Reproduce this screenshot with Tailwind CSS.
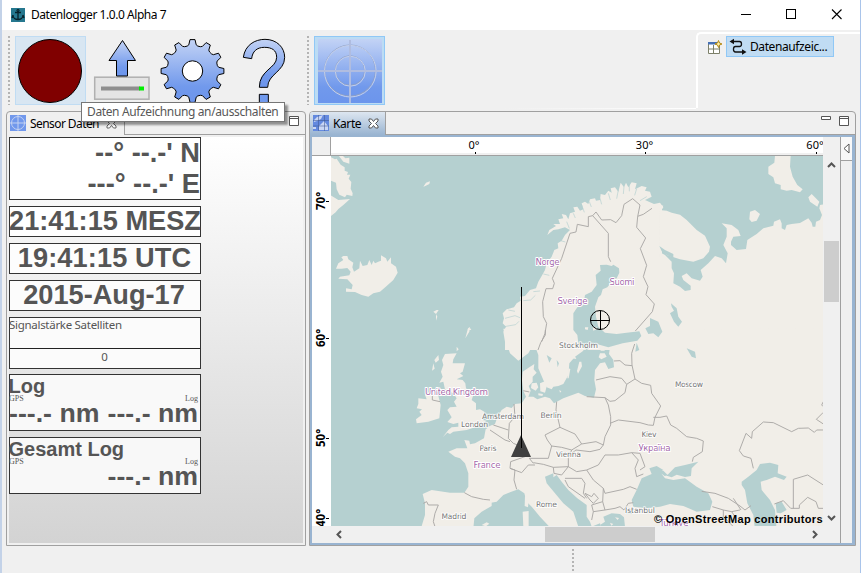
<!DOCTYPE html>
<html lang="de">
<head>
<meta charset="utf-8">
<title>Datenlogger 1.0.0 Alpha 7</title>
<script src="https://cdn.jsdelivr.net/npm/@tailwindcss/browser@4"></script>
</head>
<body class="w-[861px] h-[573px] overflow-hidden bg-[#f0f0f0] font-['Noto_Sans',sans-serif] text-[12px] text-black">
<div class="relative flex flex-col w-[861px] h-[573px] border-l-2 border-l-[#c3d2e8] border-r border-r-[#a9c4ea]">
  <!-- title bar -->
  <header class="flex items-center h-[30px] shrink-0 bg-white pl-[9px]">
    <svg class="w-[14px] h-[14px] shrink-0" viewBox="0 0 14 14"><rect width="14" height="14" fill="#26788f"/><path d="M7 2v10M4 4.500h6M2 7c0 6 10 6 10 0M2 7l-1 3M12 7l1 3" fill="none" stroke="#08232c" stroke-width="1.300"/><circle cx="7" cy="2.500" r="1.200" fill="none" stroke="#08232c"/></svg>
    <span class="ml-[6px] whitespace-nowrap leading-[30px] -tracking-[0.45px]">Datenlogger 1.0.0 Alpha 7</span>
    <svg class="ml-auto mr-[2px] w-[124px] h-[30px]" viewBox="734 0 124 30" fill="none" stroke="#000" shape-rendering="crispEdges"><path d="M741 14.500h10"/><rect x="786.500" y="9.500" width="9" height="9"/><path d="M832 9.500l9.500 9.500M841.500 9.500l-9.500 9.500" shape-rendering="auto" stroke-width="1.100"/></svg>
  </header>

  <!-- toolbar -->
  <div class="flex h-[81px] shrink-0 pt-[6px] pl-[5px]">
    <div class="w-[8px] h-[69px] pl-[1px]"><div class="w-[2px] h-full bg-[repeating-linear-gradient(#b4b4b4_0_2px,#f0f0f0_2px_4px)]"></div></div>
    <div class="w-[71px] h-[69px] bg-[#d8e6f2] border border-[#c0dcf3]"><svg class="w-[69px] h-[67px]" viewBox="0 0 69 67"><circle cx="34" cy="34" r="31.500" fill="#800000" stroke="#000"/></svg></div>
    <svg class="w-[71px] h-[70px]" viewBox="86 36 71 70">
      <defs><linearGradient id="blue" x1="0" y1="0" x2="0" y2="1"><stop offset="0" stop-color="#c3d3f5"/><stop offset=".75" stop-color="#7199ec"/><stop offset="1" stop-color="#6c95ec"/></linearGradient></defs>
      <rect x="94.700" y="77.200" width="54.300" height="22" fill="#e4e4e4" stroke="#b0b0b0" stroke-width="1.500"/><path d="M101 88.500h39" stroke="#8e8e8e" stroke-width="4"/><rect x="139" y="86.500" width="5" height="4" fill="#00f000"/>
      <path d="M122.500 40.500L135.500 60.500H127.500V76H116.500V60.500H109Z" fill="url(#blue)" stroke="#000"/>
    </svg>
    <svg class="w-[71px] h-[70px]" viewBox="157 36 71 70"><path id="gear" d="" fill="url(#blue)" stroke="#000" stroke-linejoin="round"/><circle cx="192.500" cy="71" r="10.200" fill="#fff" stroke="#000"/></svg>
    <svg class="w-[71px] h-[70px]" viewBox="228 36 71 70"><g transform="scale(.33333)"><path d="M730 172C735 135 765 118 795 118C830 118 854 142 854 172C854 215 803 222 803 262H778C778 210 830 205 830 172C830 150 815 142 793 142C770 142 757 155 755 176Z" fill="url(#blue)" stroke="#000" stroke-width="3"/><path d="M778 283h27v33h-27z" fill="#719aee" stroke="#000" stroke-width="3"/></g></svg>
    <div class="w-[15px] h-[69px] pl-[8px]"><div class="w-[2px] h-full bg-[repeating-linear-gradient(#b4b4b4_0_2px,#f0f0f0_2px_4px)]"></div></div>
    <div class="w-[71px] h-[69px] bg-[#bcdcf4] border border-[#90c8f6]"><svg class="w-[69px] h-[67px]" viewBox="315 37 69 67" fill="none"><rect x="318" y="39" width="64" height="64" fill="url(#blue)"/><g stroke="#8d9fc6"><circle cx="350" cy="70.500" r="25.500"/><circle cx="350" cy="70.500" r="14.800"/></g><g stroke="#c5d0ea"><circle cx="350.300" cy="71.200" r="25.800"/><circle cx="350.300" cy="71.200" r="15"/></g><path d="M350 40v63M318 71h64" stroke="#b0bde0" stroke-width="2"/></svg></div>
    <div class="grow ml-[120px] h-[73px] flex items-end"><div class="w-full h-px bg-linear-to-r from-[#f0f0f0] to-white"></div></div>
    <div class="w-[164px] h-[76px] -mt-[4px] border-l-2 border-t-2 border-white rounded-tl-[5px] flex pl-[9px] pt-[2px]">
      <svg class="w-[15px] h-[15px] mt-[4px]" viewBox="0 0 15 15"><path d="M1.500 2.500h11v11h-11zM6.500 5v8.500M1.500 9h11" fill="#fff" stroke="#7c8069"/><path d="M1 2h9v2.500H1z" fill="#4671b5"/><path d="M11.500 .500l1 2.500 2.500 1-2.500 1-1 2.500-1-2.500-2.500-1 2.500-1z" fill="#fff1a8" stroke="#b48b18"/></svg>
      <div class="ml-[4px] flex items-center w-[108px] h-[21px] bg-[#c0dcf3] border border-[#90c8f6] pl-[2px]">
        <svg class="w-[18px] h-[18px]" viewBox="0 0 18 18"><path d="M4 3.500h6.500a2 2.500 0 0 1 0 5H6.500a2 2.700 0 0 0 0 5.500H14" fill="none" stroke="#111" stroke-width="1.300"/><path d="M.5 3.500l4.500-2.800v5.600zM17.500 14l-4.500-2.800v5.600z" fill="#111"/></svg>
        <span class="ml-[3px] whitespace-nowrap leading-[19px] -tracking-[0.4px]">Datenaufzeic...</span>
      </div>
    </div>
  </div>

  <main class="flex h-[435px] shrink-0 pl-[4px]">
    <!-- sensor view -->
    <section class="w-[300px] h-[435px] border border-[#a0a0a0] rounded-t-[4px] flex flex-col">
      <div class="flex h-[23px] shrink-0">
        <div class="flex w-[118px] h-[23px] border-r border-[#a0a0a0] pl-[3px] pt-[3px]">
          <svg class="w-[16px] h-[16px] shrink-0" viewBox="0 0 16 16" fill="none"><rect width="16" height="16" fill="#7198ec"/><circle cx="8" cy="8" r="6.500" stroke="#c4d2f2"/><path d="M8 0v16M0 8h16" stroke="#c4d2f2"/></svg>
          <span class="w-[70px] ml-[4px] leading-[18px] whitespace-nowrap -tracking-[0.58px]">Sensor Daten</span>
          <svg class="ml-[6px] mt-[3px] w-[11px] h-[11px] shrink-0" viewBox="0 0 11 11"><path d="M1 1h2.500l2 2.500L7.500 1H10v2L7.500 5.500 10 8v2H7.500l-2-2.500-2 2.500H1V8l2.500-2.500L1 3z" fill="#fff" stroke="#666"/></svg>
        </div>
        <div class="flex grow justify-end border-b border-[#a0a0a0] pr-[6px] pt-[4px]"><svg class="w-[10px] h-[10px]" viewBox="0 0 10 10"><path d="M.5 .5h9v9h-9zM0 2.500h10" fill="#fff" stroke="#555"/></svg></div>
      </div>
      <div class="mx-[2px] mb-[2px] mt-[2px] grow bg-linear-to-b from-white to-[#d3d3d3] flex flex-col gap-[6px] items-start font-['Liberation_Sans',sans-serif] font-bold text-[#555] text-[27.2px]">
        <div class="w-[192px] h-[63px] border border-[#333] bg-white text-right leading-[29px] whitespace-nowrap"><div class="h-[31px]">--° --.-' N</div><div class="h-[30px]">---° --.-' E</div></div>
        <div class="flex w-[192px] h-[31px] border border-[#333] bg-white justify-center leading-[28px] whitespace-nowrap"><span>21:41:15 MESZ</span></div>
        <div class="flex w-[192px] h-[31px] border border-[#333] bg-[#fdfdfd] justify-center leading-[28px] whitespace-nowrap pr-px"><span class="tracking-[0.1px]">19:41:15 UTC</span></div>
        <div class="flex w-[192px] h-[31px] border border-[#333] bg-[#fcfcfc] justify-center leading-[28px] whitespace-nowrap pr-[2px]"><span>2015-Aug-17</span></div>
        <div class="w-[192px] h-[52px] border border-[#333] bg-[#fbfbfb] font-['Noto_Sans',sans-serif] font-normal text-[11.5px] -mb-px">
          <div class="h-[31px] border-b border-[#222] leading-[14px] -tracking-[0.29px] whitespace-nowrap -indent-px">Signalstärke Satelliten</div><div class="text-center leading-[16px] pr-px">0</div></div>
        <div class="w-[192px] h-[57px] border border-[#333] bg-[#f9f9f9]">
          <div class="text-[20px] leading-[22px] h-[20px] -indent-[1.5px]">Log</div>
          <div class="flex justify-between font-['Liberation_Serif',serif] font-normal text-[8px] leading-[8px] h-[6px] pr-[2px]"><span class="-ml-px">GPS</span><span>Log</span></div>
          <div class="flex justify-between text-[26.700px] leading-[25px] pr-[2px] whitespace-nowrap"><span class="-ml-px">---.- nm</span><span>---.- nm</span></div>
        </div>
        <div class="w-[192px] h-[57px] border border-[#333] bg-[#f8f8f8]">
          <div class="text-[20px] leading-[22px] h-[20px] -indent-[1.5px]">Gesamt Log</div>
          <div class="flex justify-between font-['Liberation_Serif',serif] font-normal text-[8px] leading-[8px] h-[6px] pr-[2px]"><span class="-ml-px">GPS</span><span>Log</span></div>
          <div class="text-right text-[26.700px] leading-[25px] pr-[2px]">---.- nm</div>
        </div>
      </div>
    </section>

    <!-- map view -->
    <section class="ml-[3px] w-[547px] h-[435px] border border-[#a0a0a0] rounded-t-[4px] flex flex-col overflow-hidden">
      <div class="flex h-[23px] shrink-0">
        <div class="flex w-[76px] h-[23px] border-r border-[#a0a0a0] bg-linear-to-b from-[#dde6f0] to-[#99b4d1] pl-[3px] pt-[3px]">
          <svg class="w-[16px] h-[16px] shrink-0" viewBox="0 0 16 16"><rect width="16" height="16" fill="#6389df"/><path d="M1 5l3-3 6-2-2 4-4 2-3 1zM11 6l4 5v4H6v-4zM0 12h3v2H0z" fill="#c9d6f4"/><path d="M5.500 0v16M0 5.500h16M11.500 0v16M0 11h16" stroke="#405994" stroke-opacity=".7" stroke-width=".8"/></svg>
          <span class="ml-[4px] leading-[18px] -tracking-[0.4px]">Karte</span>
          <svg class="ml-[7px] mt-[3px] w-[11px] h-[11px] shrink-0" viewBox="0 0 11 11"><path d="M1 1h2.500l2 2.500L7.500 1H10v2L7.500 5.500 10 8v2H7.500l-2-2.500-2 2.500H1V8l2.500-2.500L1 3z" fill="#fff" stroke="#555"/></svg>
        </div>
        <div class="flex grow justify-end border-b border-[#a0a0a0] pr-[6px] pt-[4px]"><svg class="w-[28px] h-[10px]" viewBox="0 0 28 10"><path d="M.5 .5h9v3h-9zM18.500 .5h9v9h-9zM18 2.500h10" fill="#fff" stroke="#555"/></svg></div>
      </div>
      <div class="grow flex bg-[#99b4d1] pt-[2px] pl-[2px] pr-[3px] pb-[2px]">
        <div class="flex flex-col w-[528px] bg-[#f0f0f0]">
          <div class="flex h-[19px]">
            <div class="w-[19px] h-[19px] border-r border-b border-[#a0a0a0]"></div>
            <svg class="w-[492px] h-[19px]" viewBox="331 137 492 19" font-family="Noto Sans, sans-serif" font-size="11" text-anchor="middle"><path fill="#fff" d="M331 137h492v16H331z"/><path stroke="#a0a0a0" d="M331 155.500h492"/><text x="474" y="149">0°</text><text x="644.500" y="149">30°</text><text x="815" y="149">60°</text><path stroke="#000" d="M475.500 152v2M645.500 152v2M816.500 152v2"/></svg>
          </div>
          <div class="flex h-[370px]">
            <svg class="w-[19px] h-[370px]" viewBox="312 156 19 370" font-family="Noto Sans, sans-serif" font-weight="bold" font-size="11.500" text-anchor="middle"><path fill="#fff" d="M312 156h19v370h-19z"/><text transform="translate(325 201) rotate(-90)">70°</text><text transform="translate(325 338) rotate(-90)">60°</text><text transform="translate(325 438) rotate(-90)">50°</text><text transform="translate(325 518) rotate(-90)">40°</text><path stroke="#000" d="M326 201.500h3M326 338.500h3M326 438.500h3M326 518.500h3"/></svg>
            <svg class="w-[492px] h-[370px]" viewBox="331 156 492 370">
              <path fill="#b5d0d0" d="M331 156h492v370H331z"/>
              <!-- north atlantic -->
              <g fill="#f1eee8" transform="translate(310 130) scale(.33333)">
                <path d="M60 80l15 8 5 -2 12 18 12 8 0 10 10 4-3 8 10 0-5 12 8 10-2 20 6 14-1 8-17-4-5 8-17-8-8-16-2-20-15-6zM60 195l25 15 35-3-20 18-15 12-8 10-17 13zM66 77h20l14 18 18 6 0-18-12 2-8-8zM340 170l8-12 12-4-2 8-12 6zM370 545l10-5 6 0-8 12 4 8-4 12 0-20zM472 600l8-6 4 6z"/>
                <path d="M100 378L112 378L115 388L130 398L127 412L132 425L148 415L150 392L158 408L172 405L178 390L185 405L190 392L195 400L205 395L213 392L213 376L228 385L232 395L243 382L243 400L258 410L263 428L250 450L230 468L210 485L190 490L175 500L155 495L135 486L108 485L108 475L125 478L128 465L112 448L85 446L90 440L118 436L122 425L112 414L95 416L78 416L85 400L100 390L94 382Z"/>
              </g>
              <!-- british isles, france, iberia -->
              <g fill="#f1eee8" transform="translate(310 330) scale(.33333)">
                <path d="M405 72L440 70L430 88L428 100L465 100L458 125L450 130L460 138L440 148L458 150L466 160L468 175L490 195L485 210L498 220L498 240L510 238L523 245L518 270L530 272L500 290L470 300L430 305L420 312L412 308L398 322L415 300L425 292L445 290L445 278L430 282L412 276L425 262L412 240L420 232L440 230L432 215L440 205L430 190L405 178L400 155L388 158L398 140L393 125L400 105L396 90Z"/>
                <path d="M385 75l-12 15 4 8 10-8zM370 100l-4 22 8-6zM466 25l8-30 6-4-2 14z M440 50l6 8-6 6z"/>
                <path d="M325 205L350 208L345 195L365 180L385 198L392 225L388 265L355 275L320 280L318 268L335 255L328 245L336 238L320 235L325 222Z"/>
                <path d="M545 285L527 298L522 325L495 340L480 343L478 332L463 330L472 355L440 355L415 365L435 380L450 385L465 400L475 430L475 470L463 488L420 488L365 480L338 492L345 520L345 555L333 595L490 595L493 565L515 545L545 528Z"/>
                <path d="M515 585l15-8 8 4-10 8z"/>
              </g>
              <!-- scandinavia and karelia -->
              <path fill="#f1eee8" transform="translate(490 150) scale(.33333)" d="M45 575L40 545L48 530L38 520L42 505L38 490L50 478L72 472L80 460L92 452L90 440L105 438L120 420L138 415L145 395L155 378L165 360L170 340L185 320L193 300L205 295L203 280L215 272L225 255L240 240L225 232L205 238L190 240L172 255L178 240L198 228L190 222L210 222L205 208L220 205L215 192L228 195L235 208L240 190L255 185L250 172L262 170L270 182L280 178L275 160L285 155L295 162L300 148L315 145L318 152L330 150L332 132L345 135L355 122L365 128L362 115L375 112L385 125L392 98L402 112L408 98L415 112L425 97L440 100L435 118L455 108L470 112L465 122L480 125L485 140L465 150L492 162L510 158L520 172L516 178V600H45Z"/>
              <!-- barents coast, islands and russia -->
              <g fill="#f1eee8" transform="translate(660 130) scale(.33333)">
                <path d="M-2 240L20 242L35 248L60 254L80 270L110 300L135 317L150 350L147 365L130 385L100 395L60 388L20 375L0 350L-2 366L15 375L35 395L35 415L42 430L40 460L60 470L75 483L92 480L92 467L70 450L65 438L80 430L95 445L120 452L128 440L122 420L145 400L165 378L185 385L198 400L203 370L190 345L200 320L200 295L185 280L215 285L235 300L242 318L220 320L213 335L213 345L230 360L258 357L262 330L290 312L310 295L340 287L342 275L360 268L365 280L365 295L375 300L380 285L395 282L420 279L445 265L455 278L458 290L466 290L468 275L480 270L486 255L478 235L480 225L495 222V620H-2Z"/>
                <path d="M345 77H392L390 110L398 140L412 165L428 178L420 187L395 180L380 182L362 178L362 165L345 160L340 142L325 132L325 110L343 98ZM285 240L300 252L290 272L275 276L268 268L270 245ZM445 202L455 192L478 215L472 230L450 215ZM0 225l10 2-3 8-7 0z"/>
              </g>
              <!-- central europe -->
              <g fill="#f1eee8" transform="translate(490 330) scale(.33333)">
                <path d="M-5 290L15 282L22 262L35 240L50 230L65 234L75 222L95 220L108 200L100 182L96 150L98 125L118 112L133 102L131 118L140 128L128 140L128 155L116 168L122 182L115 200L130 200L142 208L165 200L180 205L192 220L220 205L265 188L285 198L312 203L318 178L313 150L315 120L330 100L345 97L355 117L372 112L370 90L357 72L360 52L395 40L440 35L450 15L440 0L1008 -6V600H335L330 580L305 590L300 575L290 560L290 525L262 505L235 480L215 455L200 435L190 442L190 430L165 440L170 460L195 490L220 520L250 545L265 590H178L150 560L125 530L110 515L103 490L85 478L60 487L40 495L20 515L-5 520Z"/>
                <path d="M40 -4L50 40L60 70L85 92L115 70L132 40L145 75L145 115L160 150L170 172L185 178L190 170L205 168L220 162L235 135L238 100L255 80L280 62L280 45L265 30L255 -4ZM350 -5L440 -5L430 5L380 8L350 0Z"/>
                <path d="M125 160l15-2 5 14-8 10-14-8zM150 160l18-8 3 14-6 22-14-4zM145 190l14 2-2 6-12-2zM268 95l6 0 2 14-12 22-3-8zM235 115l6 2-5 28-4 0zM208 180l6 4-4 4zM330 70l14 0 6 10-16 8-8-6zM330 52l14 0 0 10-12 0zM105 498l12 2-3 32-10-4zM98 545l18-2 0 48-16 0zM245 85l10-6 4 8z"/>
              </g>
              <!-- inland water -->
              <g fill="#b5d0d0" transform="translate(490 330) scale(.33333)">
                <path d="M330 -195L350 -196L365 -192L370 -196L387 -185L388 -172L380 -155L365 -145L352 -128L338 -122L333 -105L325 -98L315 -70L318 -40L325 -10L345 8L380 12L410 8L448 4L454 18L442 32L398 40L355 52L320 42L290 60L265 40L262 15L250 0L250 -50L262 -68L280 -75L285 -105L305 -115L320 -135L317 -165L332 -178Z"/>
                <path d="M508 -252L525 -240L550 -228L550 -216L530 -225L515 -236ZM480 -36L505 -25L517 5L505 22L490 10L475 12L466 -5L480 -12ZM543 -80L560 -65L565 -40L576 -25L565 -10L552 -25L540 -50L552 -58L545 -70ZM590 55L615 65L618 85L605 80ZM440 38L448 60L436 65ZM170 75L185 85L178 98ZM200 90L207 100L203 112Z"/>
                <path d="M440 480L455 445L485 432L478 415L500 408L520 420L510 425L525 445L550 450L585 445L620 470L655 490L667 515L660 540L620 545L580 528L540 522L510 530L470 535L430 530L425 510ZM530 437L555 412L585 405L625 395L605 415L603 438L585 441L560 434L545 442ZM505 424l15-2 14 14-10 2z"/>
                <path d="M755 455L775 440L800 420L810 402L840 398L865 405L863 430L890 440L882 450L855 440L830 450L812 455L815 480L840 510L855 540L860 600L795 600L790 555L772 520L765 480L755 465ZM857 520L875 515L890 540L872 550L860 548Z"/>
                <path d="M340 560L365 550L390 552L402 562L405 590L345 600L330 585L345 575ZM405 545L430 540L425 552L408 552Z"/>
              </g>
              <g fill="#f1eee8" transform="translate(490 330) scale(.33333)"><path d="M375 562l12 2-4 6zM360 578l10 4-6 5zM285 -8l10 0 -2 8-8-2zM308 -8l12 0 0 6-10 4z"/></g>
              <!-- fjords -->
              <g fill="none" stroke="#b5d0d0" stroke-width="2" transform="translate(490 150) scale(.33333)"><path d="M45 505l30-8 15 6M42 530l35-6 10-10M55 480l20 4M100 452l22-2 14-14M130 425l20-2M160 372l18 4M180 335l14 2M212 272l14 4M230 215l8 20M250 190l6 14M275 165l8 22M298 155l6 16M330 145l5 18M355 130l6 20M385 120l-5 26M402 110l-2 22M418 104l0 20M440 116l-6 20M470 140l-20 12"/></g>
              <!-- borders -->
              <g fill="none" stroke="#a9a7a5" stroke-width="2.800" stroke-linejoin="round">
                <g transform="translate(490 150) scale(.33333)"><path d="M155 575L165 550L170 520L160 500L158 455L168 416H188L193 400L187 385L215 325L240 250L258 246L262 223L295 230V200L308 197L355 250V320L362 335M308 197L318 186L335 210L362 209L378 218L395 197L402 163L428 146L450 165L443 200L440 232L467 264L451 296L470 346L460 380L474 410L468 434L493 462L487 485L436 543M443 199L460 193L486 175"/></g>
                <g transform="translate(490 330) scale(.33333)"><path d="M166 0V15L152 38L144 60M434 42L425 70L426 105L435 147L410 163L395 145L360 140L318 150M372 93L390 92L405 105L426 107M410 163L405 188L375 212L360 214L345 203L290 200M435 147L455 160L482 166L485 190L512 228L495 262L490 286L475 285L450 278L385 270L360 280M345 203L355 225L362 260V285L345 320L340 345L318 335L275 342L255 312L210 292L203 262L198 240L200 215M210 292L165 315L172 330L185 348L215 352L245 360L275 342M185 348L175 385L118 385M245 360L235 385L235 410L190 412L160 403L130 398M235 378L258 360L300 365L330 358L340 345M100 182L118 186M72 222L75 260L58 280L55 325L70 340L95 350L105 380L62 395L60 415L75 420L72 450L80 478M0 300L45 330L60 335M10 285L55 300M60 415L95 428L115 405L135 405M118 385L130 400M190 412L192 430L215 435L235 410L260 425L290 420L325 405L345 375L385 375L425 368L445 390L435 415L440 440L460 432M425 368L450 370L465 410L450 420M225 445H275L285 460L280 490L290 505M225 450L235 470L285 505M290 420L310 450L340 475L345 490L400 478L420 470L440 478M285 490L305 500L312 490L325 505L310 520L300 510ZM340 475L338 515L345 540L310 545L305 525L338 515M345 540L375 535L390 530L402 540L415 520L430 518M310 545L305 570M490 262L510 262L530 258L542 285L560 295L590 320L620 325L640 333L637 365L610 382L607 395"/></g>
                <g transform="translate(660 330) scale(.33333)"><path d="M280 415L273 385L250 378L238 362L258 310L275 325L277 305L310 276L340 278L395 305L415 295L445 294L463 307L470 300H490M490 247L469 268L490 282M490 215L485 225L490 230M400 535V448L443 435L490 465M343 522L370 512L392 535H418V525L443 502L468 515L475 535H490M125 484L165 490L205 505L240 528L255 540L273 527M157 530L190 540L215 545L240 540M190 540V560L220 590M215 545L225 560L215 575M220 505L243 540"/></g>
                <g transform="translate(310 330) scale(.33333)"><path d="M367 195V210L390 215M463 488L485 500L520 508L540 510M340 520L350 515L355 525L385 525L375 550L370 575L375 590"/></g>
              </g>
              <!-- place names -->
              <g font-family="DejaVu Sans, sans-serif" font-size="7.700" text-anchor="middle" fill="#777" stroke="#fff" stroke-opacity=".75" stroke-width="2" paint-order="stroke" stroke-linejoin="round">
                <text x="578.500" y="348" textLength="39">Stockholm</text><text x="503" y="419" textLength="42">Amsterdam</text><text x="551" y="417.500" textLength="21">Berlin</text><text x="474.500" y="427" textLength="27">London</text><text x="488" y="450.500" textLength="17">Paris</text><text x="568.500" y="456.500" textLength="25">Vienna</text><text x="649" y="437" textLength="15">Kiev</text><text x="689" y="386.500" textLength="28">Moscow</text><text x="454" y="518.500" textLength="25">Madrid</text><text x="546.500" y="507" textLength="21">Rome</text><text x="640" y="513" textLength="30">Istanbul</text>
                <g fill="#a56aab" font-size="8.700" stroke-opacity="1"><text x="547.500" y="265" textLength="24">Norge</text><text x="622" y="285" textLength="25">Suomi</text><text x="572.500" y="304" textLength="30">Sverige</text><text x="456.500" y="395" textLength="63">United Kingdom</text><text x="487" y="468" textLength="27">France</text><text x="654.500" y="451" textLength="32">Україна</text><text x="674" y="526" textLength="29">Türkiye</text></g>
              </g>
              <!-- ship, course line and cursor -->
              <path d="M521 435L531 457H511Z" fill="#404040"/><path d="M521.500 287v161" stroke="#000"/><circle cx="600" cy="320" r="9.500" fill="none" stroke="#000"/><path d="M590 320.500h20M600.500 311v19" stroke="#000"/>
              <text x="654" y="523" textLength="168.500" font-family="Liberation Sans, sans-serif" font-weight="bold" font-size="11">© OpenStreetMap contributors</text>
            </svg>
            <svg class="w-[17px] h-[406px] -mt-[19px] overflow-visible" viewBox="823 137 17 406" fill="none"><path d="M824 241h15v61h-15z" fill="#cdcdcd"/><path d="M828 167l3.500-3.500L835 167M828 516l3.500 3.500L835 516" stroke="#555" stroke-width="2"/></svg>
          </div>
          <svg class="w-[528px] h-[17px]" viewBox="312 526 528 17" fill="none"><path d="M545 527h110v15H545z" fill="#cdcdcd"/><path d="M341 531l-3.500 3.500 3.500 3.500M813 531l3.500 3.500-3.500 3.500" stroke="#555" stroke-width="2"/></svg>
        </div>
        <div class="grow border-l border-[#a0a0a0] bg-[#f0f0f0]"><div class="h-[24px] border-b border-[#a0a0a0] bg-[#f8f8f8] flex items-center justify-center"><svg class="w-[7px] h-[11px]" viewBox="0 0 7 11"><path d="M6 1v9L1 5.500z" fill="#fff" stroke="#555"/></svg></div></div>
      </div>
    </section>
  </main>

  <footer class="grow pl-[570px] pt-[3px]"><div class="w-[2px] h-[22px] bg-[repeating-linear-gradient(#b4b4b4_0_2px,#f0f0f0_2px_4px)]"></div></footer>

  <div class="absolute left-[79px] top-[102px] w-[204px] h-[20px] bg-white border border-[#767676] shadow-[3px_3px_2px_rgba(0,0,0,0.4)] text-[#575757] leading-[18px] pl-[5px] whitespace-nowrap"><span class="-tracking-[0.37px]">Daten Aufzeichnung an/ausschalten</span></div>
</div>
<script>
  // twelve-toothed outline around (192.5, 71)
  const pts = [];
  for (let i = 0; i < 12; i++) {
    for (const [da, r] of [[-12, 25.5], [-8, 26.5], [-4.5, 31.5], [4.5, 31.5], [8, 26.5], [12, 25.5]]) {
      const a = (i * 30 + da - 90) * Math.PI / 180;
      pts.push((192.5 + r * Math.cos(a)).toFixed(1) + ' ' + (71 + r * Math.sin(a)).toFixed(1));
    }
  }
  document.getElementById('gear').setAttribute('d', 'M' + pts.join('L') + 'Z');
</script>
</body>
</html>
